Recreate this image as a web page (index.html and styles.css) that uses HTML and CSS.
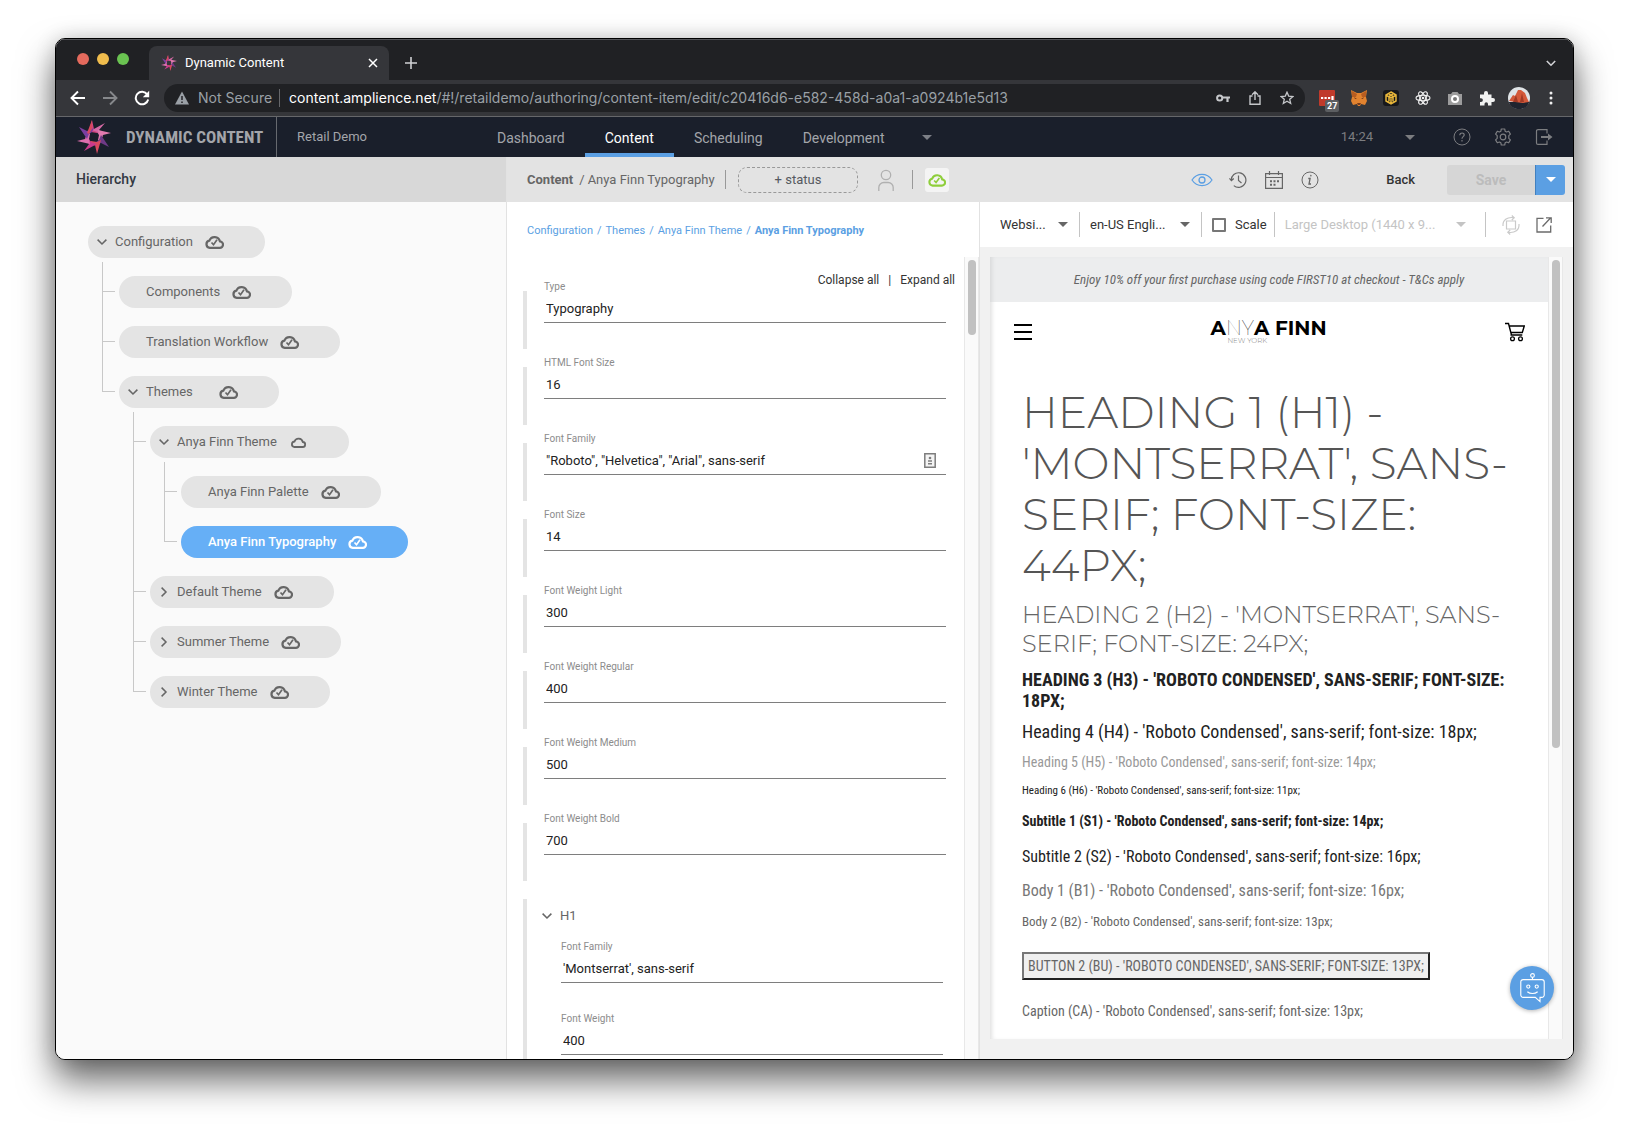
FILE: index.html
```html
<!DOCTYPE html>
<html lang="en">
<head>
<meta charset="utf-8">
<meta name="viewport" content="width=device-width, initial-scale=1">
<title>Dynamic Content</title>
<link rel="stylesheet" href="styles.css">
</head>
<body>
<svg class="sprite" aria-hidden="true">
  <symbol id="star" viewBox="-17 -17 34 34">
    <path fill="#d0457f" d="M-6-3-2-17 0-8 7-6 3-4-3-5z"/>
    <path fill="#d56aa6" d="M-2-7 11-14 5-7 9 0 5-2 3-5z"/>
    <path fill="#e27bb0" d="M4-7 17-4 9-2 6 5 4 3 5-2z"/>
    <path fill="#6f3a86" d="M7-2 15 10 7 6 0 9 2 5 5 3z"/>
    <path fill="#d8495f" d="M7 3 3 17 1 8-6 6-3 4 3 5z"/>
    <path fill="#c93a8c" d="M3 7-10 14-5 7-9 0-5 2-3 5z"/>
    <path fill="#dd6fae" d="M-4 7-17 4-9 2-6-5-4-3-5 2z"/>
    <path fill="#7b3fa0" d="M-7 2-15-10-7-6 0-9-2-5-5-3z"/>
    <path fill="#d8495f" d="M-7-4-2-17-2-8-5-3z"/>
  </symbol>
  <symbol id="cloud-check" viewBox="0 0 19 14">
    <path fill="none" stroke="currentColor" stroke-width="2.200" d="M4.800 12.900H14.500a3.300 3.300 0 0 0 .400-6.600A5.500 5.500 0 0 0 4.400 5.600 3.700 3.700 0 0 0 4.800 12.900z"/>
    <path fill="none" stroke="currentColor" stroke-width="1.700" d="M6.500 7.500 8.500 9.700 12 4.800"/>
  </symbol>
  <symbol id="cloud" viewBox="0 0 19 14">
    <path fill="none" stroke="currentColor" stroke-width="1.800" d="M5 12H13.500a2.500 2.500 0 0 0 .300-5A4.300 4.300 0 0 0 5.500 6.500 2.800 2.800 0 0 0 5 12z"/>
  </symbol>
  <symbol id="down" viewBox="0 0 10 6"><path fill="none" stroke="currentColor" stroke-width="1.500" d="M.6.6 5 5 9.400.6"/></symbol>
  <symbol id="right" viewBox="0 0 6 10"><path fill="none" stroke="currentColor" stroke-width="1.500" d="M.6.6 5 5 .6 9.400"/></symbol>
  <symbol id="caret" viewBox="0 0 10 5"><path fill="currentColor" d="M0 0h10L5 5z"/></symbol>
</svg>

<div class="window">
  <header class="tabs">
    <div class="lights"><i class="red"></i><i class="yellow"></i><i class="green"></i></div>
    <div class="tab">
      <svg class="s16"><use href="#star"/></svg>
      <span class="tab-title">Dynamic Content</span>
      <button class="icon" aria-label="Close tab"><svg class="s10" viewBox="0 0 10 10"><path stroke="#fff" stroke-width="1.500" d="m1 1 8 8M9 1 1 9"/></svg></button>
    </div>
    <button class="icon new-tab" aria-label="New tab"><svg class="s12" viewBox="0 0 12 12"><path stroke="#d0d1d4" stroke-width="1.600" d="M6 0v12M0 6h12"/></svg></button>
    <button class="icon tab-menu" aria-label="Search tabs"><svg class="s10" viewBox="0 0 10 10"><path fill="none" stroke="#d0d1d4" stroke-width="1.600" d="m.8 3 4.200 4.200L9.200 3"/></svg></button>
  </header>

  <div class="browserbar">
    <button class="icon" aria-label="Back one page"><svg class="s16" viewBox="0 0 16 16"><path fill="none" stroke="#fff" stroke-width="1.900" d="M15 8H2M8 1.500 1.500 8 8 14.500"/></svg></button>
    <button class="icon" aria-label="Forward one page"><svg class="s16" viewBox="0 0 16 16"><path fill="none" stroke="#86888b" stroke-width="1.900" d="M1 8h13M8 1.500 14.500 8 8 14.500"/></svg></button>
    <button class="icon" aria-label="Reload"><svg class="s16" viewBox="0 0 16 16"><path fill="none" stroke="#fff" stroke-width="2" d="M13.300 4.500A6.300 6.300 0 1 0 14.200 9.500"/><path fill="#fff" d="M15.200.8v6.400H8.800z"/></svg></button>
    <div class="omnibox">
      <svg class="s14" viewBox="0 0 14 14"><path fill="#9aa0a6" d="M7 .5 14 13.500H0z"/><path stroke="#202124" stroke-width="1.500" d="M7 5v4M7 10.500V12"/></svg>
      <span class="insecure">Not Secure</span>
      <span class="url"><b>content.amplience.net</b>/#!/retaildemo/authoring/content-item/edit/c20416d6-e582-458d-a0a1-a0924b1e5d13</span>
      <span class="omni-actions">
        <svg class="s14" viewBox="0 0 14 14"><circle cx="3.700" cy="7" r="2.600" fill="none" stroke="#c5c7ca" stroke-width="2"/><path fill="none" stroke="#c5c7ca" stroke-width="2.200" d="M6 6.500h8M11.500 6.500V11"/></svg>
        <svg class="s14" viewBox="0 0 14 14"><path fill="none" stroke="#c5c7ca" stroke-width="1.400" d="M4.500 5H2v8.300h10V5H9.500M7 9V1M4 3.700 7 .8l3 2.900"/></svg>
        <svg class="s14" viewBox="0 0 14 14"><path fill="none" stroke="#c5c7ca" stroke-width="1.300" d="M7 1.200 8.700 5.100l4.200.4-3.200 2.800 1 4.200L7 10.300l-3.700 2.200 1-4.200L1.100 5.500l4.200-.4z"/></svg>
      </span>
    </div>
    <div class="extensions">
      <span class="ext-badged"><svg class="s16" viewBox="0 0 16 16"><rect width="16" height="16" rx="1" fill="#c03a2b"/><path stroke="#fff" stroke-width="2.200" d="M2 8h2.200M5.500 8h2.200M9 8h2.200M13.500 6v4"/></svg><span class="badge">27</span></span>
      <svg class="s16" viewBox="0 0 16 16"><path fill="#e2832f" d="m0 0 6 3h4l6-3-1 7 1 4-2 4-4-1-1 2H7l-1-2-4 1-2-4 1-4z"/><path fill="#793c1b" d="m3 7 3 2H4zM13 7l-3 2h2zM6 13h4l-1 2H7z"/><path fill="#b85d20" d="m1 1 5 3-1 3-4 0zM15 1l-5 3 1 3 4 0z"/></svg>
      <svg class="s16" viewBox="0 0 16 16"><rect width="16" height="16" rx="3" fill="#17181b"/><path fill="none" stroke="#e8b63a" stroke-width="1.500" d="m8 2 5 3v6l-5 3-5-3V5zM3.500 5.500 8 8l4.500-2.500M8 8v5M5.500 3.700 10 6.400v5M10.500 3.700 6 6.400v5"/></svg>
      <svg class="s16" viewBox="-8 -8 16 16"><g fill="none" stroke="#f1f1f1" stroke-width="1.100"><ellipse rx="7" ry="2.700"/><ellipse rx="7" ry="2.700" transform="rotate(60)"/><ellipse rx="7" ry="2.700" transform="rotate(120)"/></g><circle r="1.300" fill="#f1f1f1"/></svg>
      <svg class="s16" viewBox="0 0 16 16"><path fill="#9c9c9c" d="M1 4h3l1.500-2h5L12 4h3v11H1z"/><circle cx="8" cy="9" r="3" fill="#777" stroke="#fff" stroke-width="2"/></svg>
      <svg class="s16" viewBox="0 0 16 16"><path fill="#f1f1f1" d="M1 4.500h4V3a2 2 0 0 1 4 0v1.500h3.500V8H14a2 2 0 0 1 0 4h-1.500v3.500H9V14a1.700 1.700 0 0 0-3.500 0v1.500H1V12h1a1.900 1.900 0 0 0 0-3.800H1z"/></svg>
      <svg class="avatar" viewBox="0 0 22 22"><circle cx="11" cy="11" r="11" fill="#dfe3e6"/><path fill="#20242f" d="M.7 15h20.600A11 11 0 0 1 .7 15z"/><path fill="#d4593a" d="m1 14 4-6 2 1 3-6 3 0 4 3 2 5 2 4-6 1-8-1z"/><path fill="#a33a26" d="m5 15 3-7 2 7zM12 15l2-9 2 9z"/></svg>
      <svg class="more" viewBox="0 0 4 14"><g fill="#f1f1f1"><circle cx="2" cy="2" r="1.500"/><circle cx="2" cy="7" r="1.500"/><circle cx="2" cy="12" r="1.500"/></g></svg>
    </div>
  </div>

  <nav class="appnav">
    <div class="brand"><svg class="brand-mark"><use href="#star"/></svg><span class="brand-name">DYNAMIC CONTENT</span></div>
    <span class="hub">Retail Demo</span>
    <div class="links">
      <a href="#dashboard">Dashboard</a>
      <a href="#content" class="active">Content</a>
      <a href="#scheduling">Scheduling</a>
      <a href="#development" class="dev">Development</a>
      <button class="icon" aria-label="More development tools"><svg class="caret"><use href="#caret"/></svg></button>
    </div>
    <div class="nav-tools">
      <button class="icon clock">14:24<svg class="caret"><use href="#caret"/></svg></button>
      <svg class="s18" viewBox="0 0 18 18"><circle cx="9" cy="9" r="8" fill="none" stroke="currentColor"/><path fill="none" stroke="currentColor" stroke-width="1.200" d="M6.800 7.200c0-3 4.600-2.800 4.400-.2C11.100 8.700 9 8.600 9 10.800M9 12v1.400"/></svg>
      <svg class="s18" viewBox="0 0 18 18"><circle cx="9" cy="9" r="2.800" fill="none" stroke="currentColor" stroke-width="1.200"/><path fill="none" stroke="currentColor" stroke-width="1.200" stroke-linejoin="round" d="M7.300 1h3.400l.5 2.300 1.300.7 2.200-.8 1.700 2.900L14.800 7.700v2.600l1.600 1.600-1.700 2.900-2.200-.8-1.300.7-.5 2.300H7.300l-.5-2.300L5.500 14l-2.200.8-1.700-2.900 1.600-1.600V7.700L1.600 6.100l1.700-2.900 2.200.8 1.300-.7z"/></svg>
      <svg class="s18" viewBox="0 0 18 18"><path fill="none" stroke="currentColor" stroke-width="1.200" d="M12 5.500V1.600H3a1.500 1.500 0 0 0-1.500 1.500v11.800A1.500 1.500 0 0 0 3 16.400h9v-3.900"/><path fill="currentColor" d="M6 8h7V5.500L17.500 9 13 12.500V10H6z"/></svg>
    </div>
  </nav>

  <div class="columns">
    <aside class="hierarchy">
      <h2 class="side-title">Hierarchy</h2>
      <ul class="tree">
        <li><a class="node" href="#configuration"><svg class="chev"><use href="#down"/></svg><span class="name">Configuration</span><svg class="cloud"><use href="#cloud-check"/></svg></a>
          <ul>
            <li><a class="node" href="#components"><span class="chev"></span><span class="name">Components</span><svg class="cloud"><use href="#cloud-check"/></svg></a></li>
            <li><a class="node" href="#translation"><span class="chev"></span><span class="name">Translation Workflow</span><svg class="cloud"><use href="#cloud-check"/></svg></a></li>
            <li><a class="node" href="#themes"><svg class="chev"><use href="#down"/></svg><span class="name">Themes</span><svg class="cloud"><use href="#cloud-check"/></svg></a>
              <ul>
                <li><a class="node" href="#anya-finn"><svg class="chev"><use href="#down"/></svg><span class="name">Anya Finn Theme</span><svg class="cloud"><use href="#cloud"/></svg></a>
                  <ul>
                    <li><a class="node" href="#palette"><span class="chev"></span><span class="name">Anya Finn Palette</span><svg class="cloud"><use href="#cloud-check"/></svg></a></li>
                    <li><a class="node selected" href="#typography"><span class="chev"></span><span class="name">Anya Finn Typography</span><svg class="cloud"><use href="#cloud-check"/></svg></a></li>
                  </ul>
                </li>
                <li><a class="node" href="#default"><svg class="chev"><use href="#right"/></svg><span class="name">Default Theme</span><svg class="cloud"><use href="#cloud-check"/></svg></a></li>
                <li><a class="node" href="#summer"><svg class="chev"><use href="#right"/></svg><span class="name">Summer Theme</span><svg class="cloud"><use href="#cloud-check"/></svg></a></li>
                <li><a class="node" href="#winter"><svg class="chev"><use href="#right"/></svg><span class="name">Winter Theme</span><svg class="cloud"><use href="#cloud-check"/></svg></a></li>
              </ul>
            </li>
          </ul>
        </li>
      </ul>
    </aside>

    <main class="work">
      <div class="itembar">
        <div class="item-title"><a href="#content">Content</a><span class="slash">/</span><span>Anya Finn Typography</span></div>
        <i class="rule"></i>
        <button class="status">+ status</button>
        <svg class="person" viewBox="0 0 16 22"><circle cx="8" cy="6" r="4.700" fill="none" stroke="#b0b0b0" stroke-width="1.300"/><path fill="none" stroke="#b0b0b0" stroke-width="1.300" d="M.8 22v-3.500a5 5 0 0 1 5-5h4.400a5 5 0 0 1 5 5V22"/></svg>
        <i class="rule"></i>
        <span class="chip"><svg class="cloud"><use href="#cloud-check"/></svg></span>
        <div class="item-actions">
          <svg class="eye" viewBox="0 0 22 14"><path fill="none" stroke="#5b9fe3" stroke-width="1.200" d="M1 7c5-7.500 15-7.500 20 0-5 7.500-15 7.500-20 0z"/><circle cx="11" cy="7" r="3" fill="none" stroke="#5b9fe3" stroke-width="1.300"/></svg>
          <svg class="s18" viewBox="0 0 18 18"><path fill="none" stroke="currentColor" stroke-width="1.200" d="M2.300 9.500A7.300 7.300 0 1 1 4.800 14.600M.4 7.300l2 2.300L4.800 7.500M9.500 4.500V9.500l3 2.500"/></svg>
          <svg class="s18" viewBox="0 0 18 18"><path fill="none" stroke="currentColor" stroke-width="1.200" d="M.6 2.600h16.800v14.800H.6zM.6 6.500h16.800M4.500 0v4M13.500 0v4"/><path stroke="currentColor" stroke-width="2" stroke-dasharray="2 1.500" d="M5 10.200h9M5 13.700h5.500"/></svg>
          <svg class="s18" viewBox="0 0 18 18"><circle cx="9" cy="9" r="8" fill="none" stroke="currentColor"/><path fill="none" stroke="currentColor" stroke-width="1.300" d="M10 3.800 9.700 5.300M7.300 7.500h1.800L8 13h2"/></svg>
        </div>
        <button class="back">Back</button>
        <div class="save-group"><button class="save" disabled>Save</button><button class="save-more" aria-label="Save options"><svg class="caret"><use href="#caret"/></svg></button></div>
      </div>

      <div class="panes">
        <section class="editor">
          <nav class="crumbs"><a href="#configuration">Configuration</a><span>/</span><a href="#themes">Themes</a><span>/</span><a href="#anya-finn">Anya Finn Theme</a><span>/</span><a href="#typography"><b>Anya Finn Typography</b></a></nav>
          <div class="scroll">
            <form class="fields">
              <div class="bulk"><button type="button">Collapse all</button><span>|</span><button type="button">Expand all</button></div>
              <div class="field"><label for="f1">Type</label><input id="f1" value="Typography"></div>
              <div class="field"><label for="f2">HTML Font Size</label><input id="f2" value="16"></div>
              <div class="field"><label for="f3">Font Family</label><input id="f3" value='"Roboto", "Helvetica", "Arial", sans-serif'><svg class="autofill" viewBox="0 0 12 15"><path fill="#f4f4f4" stroke="#7d7d7d" stroke-width="1.500" d="M.8.8h10.400v13.400H.8z"/><circle cx="6" cy="5" r="1.300" fill="#7d7d7d"/><path stroke="#7d7d7d" stroke-width="1.600" d="M4 8h4M4 10.800h4"/></svg></div>
              <div class="field"><label for="f4">Font Size</label><input id="f4" value="14"></div>
              <div class="field"><label for="f5">Font Weight Light</label><input id="f5" value="300"></div>
              <div class="field"><label for="f6">Font Weight Regular</label><input id="f6" value="400"></div>
              <div class="field"><label for="f7">Font Weight Medium</label><input id="f7" value="500"></div>
              <div class="field"><label for="f8">Font Weight Bold</label><input id="f8" value="700"></div>
              <fieldset class="group">
                <legend><button type="button"><svg class="chev"><use href="#down"/></svg>H1</button></legend>
                <div class="field"><label for="g1">Font Family</label><input id="g1" value="'Montserrat', sans-serif"></div>
                <div class="field"><label for="g2">Font Weight</label><input id="g2" value="400"></div>
              </fieldset>
            </form>
            <div class="bar"><i class="thumb short"></i></div>
          </div>
        </section>

        <section class="preview">
          <div class="previewbar">
            <span class="pick site"><select aria-label="Visualisation"><option>Websi...</option></select><svg class="caret"><use href="#caret"/></svg></span>
            <i class="rule"></i>
            <span class="pick locale"><select aria-label="Locale"><option>en-US Engli...</option></select><svg class="caret"><use href="#caret"/></svg></span>
            <i class="rule"></i>
            <label class="scale"><input type="checkbox">Scale</label>
            <i class="rule"></i>
            <span class="pick device"><select aria-label="Device" disabled><option>Large Desktop (1440 x 9...</option></select><svg class="caret"><use href="#caret"/></svg></span>
            <i class="rule"></i>
            <svg class="rotate" viewBox="0 0 18 20"><path fill="none" stroke="#cacaca" stroke-width="1.200" d="M4.500 6h9v8h-9zM1 11C.5 5 5 1.700 12 2.700M9.800.5l2.400 2.200-2.400 2.300M17 9c.5 6-4 9.300-11 8.300M8.200 19.500l-2.400-2.200 2.400-2.300"/></svg>
            <svg class="s16" viewBox="0 0 16 16"><path fill="none" stroke="#6b6b6b" stroke-width="1.300" d="M7.500 1.300H1v13.700h13.700V8.500M6.500 9.500l8-8.500M10 .8h5.200V6"/></svg>
          </div>

          <div class="frame">
            <div class="page">
              <p class="promo">Enjoy 10% off your first purchase using code FIRST10 at checkout - T&amp;Cs apply</p>
              <div class="store-head">
                <button class="icon" aria-label="Menu"><svg class="burger" viewBox="0 0 18 16"><path stroke="#000" stroke-width="2" d="M0 1h18M0 8h18M0 15h18"/></svg></button>
                <div class="store-logo"><span>A<i>NY</i>A FINN</span><small>NEW YORK</small></div>
                <svg class="cart" viewBox="0 0 20 20"><path fill="none" stroke="#000" stroke-width="1.400" d="M0 1.500h3.500l3 11.500h10.800M4.300 4h15l-2 6.500-11 0M5.500 13h11"/><circle cx="7.500" cy="16.700" r="1.900" fill="none" stroke="#000" stroke-width="1.300"/><circle cx="15.500" cy="16.700" r="1.900" fill="none" stroke="#000" stroke-width="1.300"/></svg>
              </div>
              <div class="samples">
                <h1>HEADING 1 (H1) -<br>'MONTSERRAT', SANS-<br>SERIF; FONT-SIZE:<br>44PX;</h1>
                <h2>HEADING 2 (H2) - 'MONTSERRAT', SANS-<br>SERIF; FONT-SIZE: 24PX;</h2>
                <h3>HEADING 3 (H3) - 'ROBOTO CONDENSED', SANS-SERIF; FONT-SIZE:<br>18PX;</h3>
                <h4>Heading 4 (H4) - 'Roboto Condensed', sans-serif; font-size: 18px;</h4>
                <h5>Heading 5 (H5) - 'Roboto Condensed', sans-serif; font-size: 14px;</h5>
                <h6>Heading 6 (H6) - 'Roboto Condensed', sans-serif; font-size: 11px;</h6>
                <p class="sub1">Subtitle 1 (S1) - 'Roboto Condensed', sans-serif; font-size: 14px;</p>
                <p class="sub2">Subtitle 2 (S2) - 'Roboto Condensed', sans-serif; font-size: 16px;</p>
                <p class="body1">Body 1 (B1) - 'Roboto Condensed', sans-serif; font-size: 16px;</p>
                <p class="body2">Body 2 (B2) - 'Roboto Condensed', sans-serif; font-size: 13px;</p>
                <button class="sample-button">BUTTON 2 (BU) - 'ROBOTO CONDENSED', SANS-SERIF; FONT-SIZE: 13PX;</button>
                <p class="caption">Caption (CA) - 'Roboto Condensed', sans-serif; font-size: 13px;</p>
              </div>
            </div>
            <div class="bar"><i class="thumb long"></i></div>
          </div>
        </section>
      </div>
    </main>
  </div>
  <button class="bot" aria-label="Help assistant"><svg viewBox="0 0 26 32"><g fill="none" stroke="#fff" stroke-width="1.200"><circle cx="13" cy="2.600" r="2"/><path d="M13 4.600V7M3 7h20a2.500 2.500 0 0 1 2.500 2.500v14A2.500 2.500 0 0 1 23 26h-2v4.500L16 26H3a2.500 2.500 0 0 1-2.500-2.500v-14A2.500 2.500 0 0 1 3 7zM7.500 20c3 2.500 8 2.500 11 0"/><circle cx="8.500" cy="14.500" r="1.700"/><circle cx="17.500" cy="14.500" r="1.700"/></g></svg></button>
</div>
</body>
</html>
```
FILE: styles.css
```css
* { box-sizing: border-box; }

body {
  margin: 0;
  height: 100vh;
  padding: 38px 55px 73px;
  background: #fff;
  font: 13px/16px Roboto, "Liberation Sans", sans-serif;
  color: #666;
  overflow: hidden;
}

h1, h2, h3, h4, h5, h6, p, ul, fieldset { margin: 0; padding: 0; }
a { color: inherit; text-decoration: none; }
svg { display: block; flex: none; }
button, input, select { font: inherit; color: inherit; }
button { border: 0; padding: 0; background: none; }
.sprite { position: absolute; width: 0; height: 0; }
.icon { display: flex; align-items: center; }
.s10 { width: 10px; height: 10px; }
.s12 { width: 12px; height: 12px; }
.s14 { width: 14px; height: 14px; }
.s16 { width: 16px; height: 16px; }
.s18 { width: 18px; height: 18px; }
.caret { width: 10px; height: 5px; }
.cloud { width: 19px; height: 14px; }
.rule { flex: none; width: 1px; background: #999; }

.window {
  position: relative;
  display: flex;
  flex-direction: column;
  height: 100%;
  border: 1px solid #000;
  border-radius: 10px;
  overflow: hidden;
  background: #fff;
  box-shadow: 0 20px 36px rgba(0, 0, 0, .6), 0 0 20px rgba(0, 0, 0, .15);
}

/* browser chrome */
.tabs {
  flex: none;
  display: flex;
  height: 41px;
  padding: 7px 17px 0 21px;
  background: #202124;
  box-shadow: inset 0 1px #55565a;
}
.lights { display: flex; gap: 8px; padding-top: 7px; width: 72px; }
.lights i { width: 12px; height: 12px; border-radius: 50%; }
.red { background: #e46a5d; }
.yellow { background: #f0bd4d; }
.green { background: #6ac351; }
.tab {
  display: flex;
  align-items: center;
  gap: 8px;
  width: 240px;
  padding: 0 11px 0 12px;
  border-radius: 8px 8px 0 0;
  background: #35363a;
  color: #fff;
}
.tab-title { flex: 1; }
.new-tab { margin-left: 16px; }
.tab-menu { margin-left: auto; }

.browserbar {
  flex: none;
  display: flex;
  align-items: center;
  gap: 16px;
  height: 37px;
  padding: 0 20px 0 14px;
  border-bottom: 1px solid #66676a;
  background: #35363a;
}
.omnibox {
  flex: 1;
  display: flex;
  align-items: center;
  height: 28px;
  margin-left: -2px;
  padding: 0 11px;
  border-radius: 14px;
  background: #202124;
  color: #9aa0a6;
  font: 14px/18px Inter, Roboto, sans-serif;
}
.insecure { padding: 0 7px 0 9px; border-right: 1px solid #66676a; }
.url { padding-left: 9px; }
.url b { font-weight: 400; color: #fff; }
.omni-actions { display: flex; gap: 18px; margin-left: auto; }
.extensions { display: flex; align-items: center; gap: 16px; margin-left: -2px; }
.ext-badged { position: relative; }
.badge {
  position: absolute;
  left: 6px;
  top: 10px;
  padding: 0 2px;
  border-radius: 2px;
  background: #5c5e61;
  color: #fff;
  font: 700 9px/12px Roboto, sans-serif;
}
.avatar { width: 22px; height: 22px; margin: 0 -3px; }
.more { width: 4px; height: 14px; margin-left: 6px; }

/* application navigation */
.appnav {
  flex: none;
  display: flex;
  align-items: center;
  height: 40px;
  background: #1a1f2b;
  color: #a3a5aa;
}
.brand {
  display: flex;
  align-items: center;
  align-self: stretch;
  gap: 15px;
  width: 221px;
  padding-left: 21px;
  border-right: 1px solid #66696f;
}
.brand-mark { width: 34px; height: 34px; }
.brand-name { font: 700 17px/20px "Roboto Condensed", Roboto, sans-serif; white-space: nowrap; }
.hub { width: 200px; padding-left: 20px; }
.links { display: flex; align-self: stretch; align-items: center; font-size: 14px; }
.links a { display: flex; align-items: center; height: 40px; padding: 1px 20px 0; }
.links .active { color: #fff; box-shadow: inset 0 -4px #5b9fe3; }
.links .icon { padding-left: 17px; color: #7c7f86; }
.nav-tools { display: flex; align-items: center; gap: 23px; margin-left: auto; padding-right: 20px; color: #7c7d80; }
.clock { gap: 32px; margin-right: 15px; }

.columns { flex: 1; min-height: 0; display: flex; }

/* hierarchy */
.hierarchy { flex: none; width: 451px; background: #fafafa; border-right: 1px solid #e2e2e2; }
.side-title {
  height: 45px;
  padding-left: 20px;
  background: #d8d8d8;
  color: #333943;
  font: 500 14px/44px Roboto, sans-serif;
}
.tree { padding: 24px 0 0 32px; }
.tree ul { padding-left: 31px; }
.tree li { list-style: none; }
.tree ul li { position: relative; padding-top: 18px; }
.tree ul li::before,
.tree ul li::after { content: ""; position: absolute; left: -17px; }
.tree ul li::before { top: 0; bottom: 0; border-left: 1px solid #c8c8c8; }
.tree ul li:first-child::before { top: 4px; }
.tree ul li:last-child::before { bottom: auto; height: 34px; }
.tree ul li::after { top: 33px; width: 13px; border-top: 1px solid #c8c8c8; }
.node {
  display: flex;
  align-items: center;
  width: fit-content;
  height: 32px;
  padding: 0 41px 0 9px;
  border-radius: 16px;
  background: #e4e4e4;
}
.chev { width: 10px; height: 10px; margin-right: 8px; }
.name { min-width: 61px; margin-right: 12px; }
.selected { background: #66aff6; color: #fff; font-weight: 500; }

/* item bar */
.work { flex: 1; min-width: 0; display: flex; flex-direction: column; }
.itembar {
  flex: none;
  display: flex;
  align-items: center;
  height: 45px;
  padding: 0 8px 0 20px;
  background: #e3e3e3;
}
.item-title { display: flex; width: 198px; white-space: nowrap; }
.item-title a { font-weight: 700; }
.slash { padding: 0 3px 0 6px; }
.itembar .rule { height: 19px; }
.status {
  width: 120px;
  height: 26px;
  margin: 0 20px 0 12px;
  border: 1px dashed #999;
  border-radius: 9px;
  color: #555960;
}
.person { width: 16px; height: 22px; margin-right: 18px; }
.chip { display: flex; margin-left: 12px; padding: 5px 3px; border-radius: 3px; background: #f4f4f4; color: #8fce3c; }
.chip .cloud { width: 18px; }
.item-actions { display: flex; align-items: center; gap: 18px; margin-left: auto; }
.eye { width: 22px; height: 14px; margin-right: -2px; }
.back { margin: 0 32px 0 67px; color: #333; font-weight: 500; }
.save-group { display: flex; }
.save { width: 88px; height: 30px; border-radius: 3px 0 0 3px; background: #d6d6d6; color: #bcbcbc; font-weight: 700; font-size: 14px; }
.save-more { display: grid; place-items: center; width: 30px; height: 30px; border-radius: 0 3px 3px 0; border-left: 1px solid #4180bf; background: #5b9fe3; color: #fff; }

.panes { flex: 1; min-height: 0; display: flex; }

/* editor */
.editor { flex: 0 0 473px; display: flex; flex-direction: column; border-right: 1px solid #e2e2e2; }
.crumbs { flex: none; display: flex; gap: 4px; height: 55px; padding: 21px 0 0 20px; color: #5b9fe3; font-size: 11px; }
.scroll { flex: 1; min-height: 0; display: flex; }
.fields { flex: 1; min-width: 0; padding: 15px 18px 0 16px; overflow: hidden; }
.bar { flex: none; width: 15px; padding: 3px; border: solid #e8e8e8; border-width: 0 1px; background: #fafafa; }
.thumb { display: block; width: 8px; border-radius: 4px; background: #c1c1c1; }
.short { height: 75px; }
.long { height: 488px; }
.bulk { display: flex; justify-content: flex-end; gap: 9px; height: 7px; margin-right: -9px; color: #333; font-size: 12px; }
.field {
  position: relative;
  height: 76px;
  padding: 0 0 0 21px;
}
.fields > .field::before { content: ""; position: absolute; left: 0; top: 12px; width: 4px; height: 58px; background: #e4e4e4; }
.field label { display: block; color: #8c8c8c; font-size: 10px; line-height: 16px; }
.field input {
  display: block;
  width: 100%;
  height: 28px;
  padding: 0 2px;
  border: 0;
  border-bottom: 1px solid #7e7e7e;
  background: none;
  color: #222;
}
.autofill { position: absolute; right: 10px; top: 22px; width: 12px; height: 15px; }
.group { margin-top: 12px; border: 0; border-left: 4px solid #e4e4e4; min-width: 0; }
.group legend { display: block; float: left; width: 100%; padding: 9px 0 15px 15px; }
.group legend button { display: flex; align-items: center; }
.group .field { clear: both; height: 72px; margin: 0 3px 0 34px; padding: 0; }

/* preview */
.preview { flex: 1; min-width: 0; display: flex; flex-direction: column; background: #f1f1f1; }
.previewbar { flex: none; display: flex; align-items: center; height: 45px; padding: 0 21px 0 20px; background: #fff; color: #333; }
.previewbar .rule { height: 25px; background: #c4c4c4; }
.pick { display: flex; align-items: center; justify-content: space-between; }
.pick select { flex: 1; min-width: 0; padding: 0; border: 0; background: none; appearance: none; opacity: 1; }
.pick .caret { color: #666; }
.site { width: 68px; margin-right: 11px; }
.locale { width: 100px; margin: 0 11px 0 10px; }
.scale { display: flex; align-items: center; gap: 9px; margin: 0 7px 0 10px; }
.scale input { appearance: none; width: 14px; height: 14px; margin: 0; border: 2px solid #777; border-radius: 1px; background: #fff; }
.device { width: 181px; margin: 0 auto 0 10px; color: #c4c4c4; }
.device .caret { color: #c4c4c4; }
.rotate { width: 18px; height: 20px; margin: 0 16px; }
.frame { flex: 1; min-height: 0; display: flex; margin: 10px 10px 20px; }
.page { flex: 1; min-width: 0; overflow: hidden; background: #fff; box-shadow: inset 4px 0 4px -2px rgba(0, 0, 0, .12); font-family: "Roboto Condensed", Roboto, sans-serif; }
.promo { height: 45px; background: rgba(200, 202, 206, .35); text-align: center; font-size: 13px; font-style: italic; line-height: 45px; }
.store-head { display: flex; align-items: center; justify-content: space-between; height: 59px; padding: 0 23px 0 24px; }
.burger { width: 18px; height: 16px; }
.cart { width: 20px; height: 20px; }
.store-logo { display: flex; flex-direction: column; color: #000; font: 700 20px/18px Montserrat, Inter, sans-serif; }
.store-logo i { font-style: normal; font-weight: 100; }
.store-logo small { padding-left: 17px; color: #888; font-size: 7px; line-height: 7px; font-weight: 300; }

.samples { padding: 26px 0 0 32px; white-space: nowrap; color: #666; }
.samples h1, .samples h2 { font-family: Montserrat, Inter, sans-serif; font-weight: 300; }
.samples h1 { color: #555; font-size: 44px; line-height: 51px; }
.samples h2 { margin-top: 9px; font-size: 24px; line-height: 29px; }
.samples h3 { margin-top: 11px; color: #222; font-size: 18px; line-height: 21px; }
.samples h4 { margin-top: 10px; color: #222; font-size: 18px; line-height: 21px; font-weight: 400; }
.samples h5 { margin-top: 11px; color: #999; font-size: 14px; line-height: 18px; font-weight: 400; }
.samples h6 { margin-top: 12px; color: #222; font-size: 11px; line-height: 16px; font-weight: 400; }
.samples p { line-height: 20px; }
.samples .sub1 { margin-top: 12px; color: #222; font-size: 14px; font-weight: 700; }
.samples .sub2 { margin-top: 16px; color: #222; font-size: 16px; }
.samples .body1 { margin-top: 14px; font-size: 16px; color: #777; }
.samples .body2 { margin-top: 11px; font-size: 13px; }
.sample-button { display: block; height: 28px; margin-top: 20px; padding: 0 4px; border: 2px solid; border-color: #777 #222 #222 #777; background: #efefef; font-size: 14px; }
.samples .caption { margin-top: 21px; font-size: 14px; }

.bot {
  position: absolute;
  right: 19px;
  bottom: 49px;
  display: grid;
  place-items: center;
  width: 44px;
  height: 44px;
  border-radius: 50%;
  background: #5b9fe3;
  box-shadow: 0 1px 4px rgba(0, 0, 0, .3);
}
.bot svg { width: 25px; height: 30px; }
```
